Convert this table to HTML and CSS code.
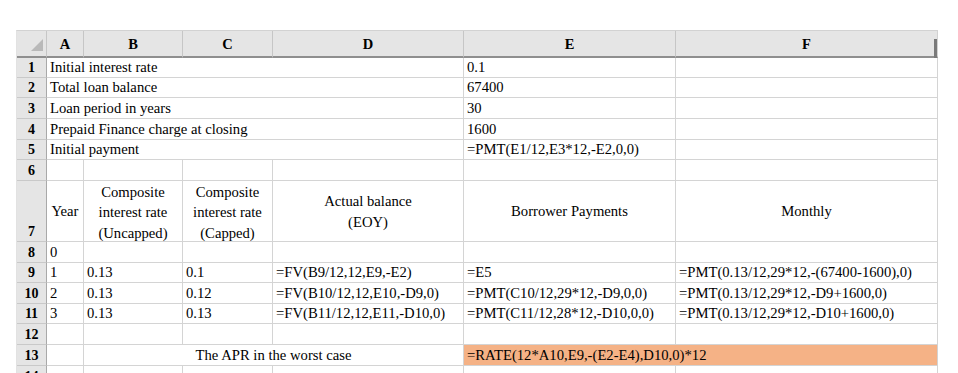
FILE: index.html
```html
<!DOCTYPE html>
<html>
<head>
<meta charset="utf-8">
<link rel="stylesheet" href="styles.css">
</head>
<body>
<div class="sheet">
  <div class="corner"><svg width="12" height="12" viewBox="0 0 12 12"><polygon points="12,0 12,12 0,12" fill="#b9b9b9"/></svg></div>
  <div class="ch">A</div><div class="ch">B</div><div class="ch">C</div><div class="ch">D</div><div class="ch">E</div><div class="ch last">F</div>

  <div class="rh">1</div><div class="c s4">Initial interest rate</div><div class="c">0.1</div><div class="c"></div>
  <div class="rh">2</div><div class="c s4">Total loan balance</div><div class="c">67400</div><div class="c"></div>
  <div class="rh">3</div><div class="c s4">Loan period in years</div><div class="c">30</div><div class="c"></div>
  <div class="rh">4</div><div class="c s4">Prepaid Finance charge at closing</div><div class="c">1600</div><div class="c"></div>
  <div class="rh">5</div><div class="c s4">Initial payment</div><div class="c">=PMT(E1/12,E3*12,-E2,0,0)</div><div class="c"></div>
  <div class="rh">6</div><div class="c"></div><div class="c"></div><div class="c"></div><div class="c"></div><div class="c"></div><div class="c"></div>

  <div class="rh">7</div>
  <div class="c hd">Year</div>
  <div class="c hd tall">Composite<br>interest rate<br>(Uncapped)</div>
  <div class="c hd tall">Composite<br>interest rate<br>(Capped)</div>
  <div class="c hd">Actual balance<br>(EOY)</div>
  <div class="c hd">Borrower Payments</div>
  <div class="c hd">Monthly</div>

  <div class="rh">8</div><div class="c">0</div><div class="c"></div><div class="c"></div><div class="c"></div><div class="c"></div><div class="c"></div>
  <div class="rh">9</div><div class="c">1</div><div class="c">0.13</div><div class="c">0.1</div><div class="c">=FV(B9/12,12,E9,-E2)</div><div class="c">=E5</div><div class="c">=PMT(0.13/12,29*12,-(67400-1600),0)</div>
  <div class="rh">10</div><div class="c">2</div><div class="c">0.13</div><div class="c">0.12</div><div class="c">=FV(B10/12,12,E10,-D9,0)</div><div class="c">=PMT(C10/12,29*12,-D9,0,0)</div><div class="c">=PMT(0.13/12,29*12,-D9+1600,0)</div>
  <div class="rh">11</div><div class="c">3</div><div class="c">0.13</div><div class="c">0.13</div><div class="c">=FV(B11/12,12,E11,-D10,0)</div><div class="c">=PMT(C11/12,28*12,-D10,0,0)</div><div class="c">=PMT(0.13/12,29*12,-D10+1600,0)</div>
  <div class="rh">12</div><div class="c"></div><div class="c"></div><div class="c"></div><div class="c"></div><div class="c"></div><div class="c"></div>
  <div class="rh">13</div><div class="c"></div><div class="c s3 center">The APR in the worst case</div><div class="c s2 hl">=RATE(12*A10,E9,-(E2-E4),D10,0)*12</div>
  <div class="rh">14</div><div class="c"></div><div class="c"></div><div class="c"></div><div class="c"></div><div class="c"></div><div class="c"></div>
</div>
</body>
</html>
```

FILE: styles.css
```css
html, body {
  margin: 0;
  padding: 0;
  background: #ffffff;
  overflow: hidden;
}

body {
  font-family: "Liberation Serif", "Times New Roman", serif;
  color: #000000;
}

.sheet {
  display: grid;
  grid-template-columns: 30px 37px 99px 90px 191px 212px 262px;
  grid-template-rows: 27px 20px 20px 21px 21px 20px 21px 61px 21px 20px 21px 20px 21px 21px 21px;
  width: max-content;
  margin: 30px 0 0 16px;
  border-top: 1px solid #d2d2d2;
  border-left: 1px solid #e2e2e2;
}

.corner,
.ch,
.rh,
.c {
  box-sizing: border-box;
  min-width: 0;
}

.corner {
  background: #e5e5e5;
  border-right: 1px solid #c6c6c6;
  border-bottom: 2px solid #8f8f8f;
  display: flex;
  justify-content: flex-end;
  align-items: flex-end;
  padding: 0 3px 5px 0;
}

.ch {
  background: #e5e5e5;
  border-right: 1px solid #c6c6c6;
  border-bottom: 2px solid #8f8f8f;
  display: flex;
  align-items: center;
  justify-content: center;
  font-weight: bold;
  font-size: 14.5px;
  padding-top: 1px;
}

.ch.last {
  position: relative;
  border-right: 1px solid #d2d2d2;
}

.ch.last::after {
  content: "";
  position: absolute;
  right: 0;
  top: 8px;
  bottom: -2px;
  width: 3px;
  background: #7a7a7a;
}

.rh {
  background: #e5e5e5;
  border-right: 1px solid #a9a9a9;
  border-bottom: 1px solid #c9c9c9;
  display: flex;
  align-items: flex-end;
  justify-content: center;
  font-weight: bold;
  font-size: 14px;
  line-height: 19px;
}

.c {
  border-right: 1px solid #d4d4d4;
  border-bottom: 1px solid #d4d4d4;
  display: flex;
  align-items: flex-end;
  padding: 0 3px;
  font-size: 14.67px;
  line-height: 19px;
  white-space: nowrap;
}

.s4 { grid-column: span 4; }
.s3 { grid-column: span 3; }
.s2 { grid-column: span 2; }

.center { justify-content: center; }

.hd {
  align-items: center;
  justify-content: center;
  text-align: center;
  line-height: 20.5px;
  padding: 1px 1px 0;
}

.hd.tall {
  padding-top: 3px;
}

.hl {
  background: #f5b286;
  border-right: 1px solid #d2d2d2;
}
```
